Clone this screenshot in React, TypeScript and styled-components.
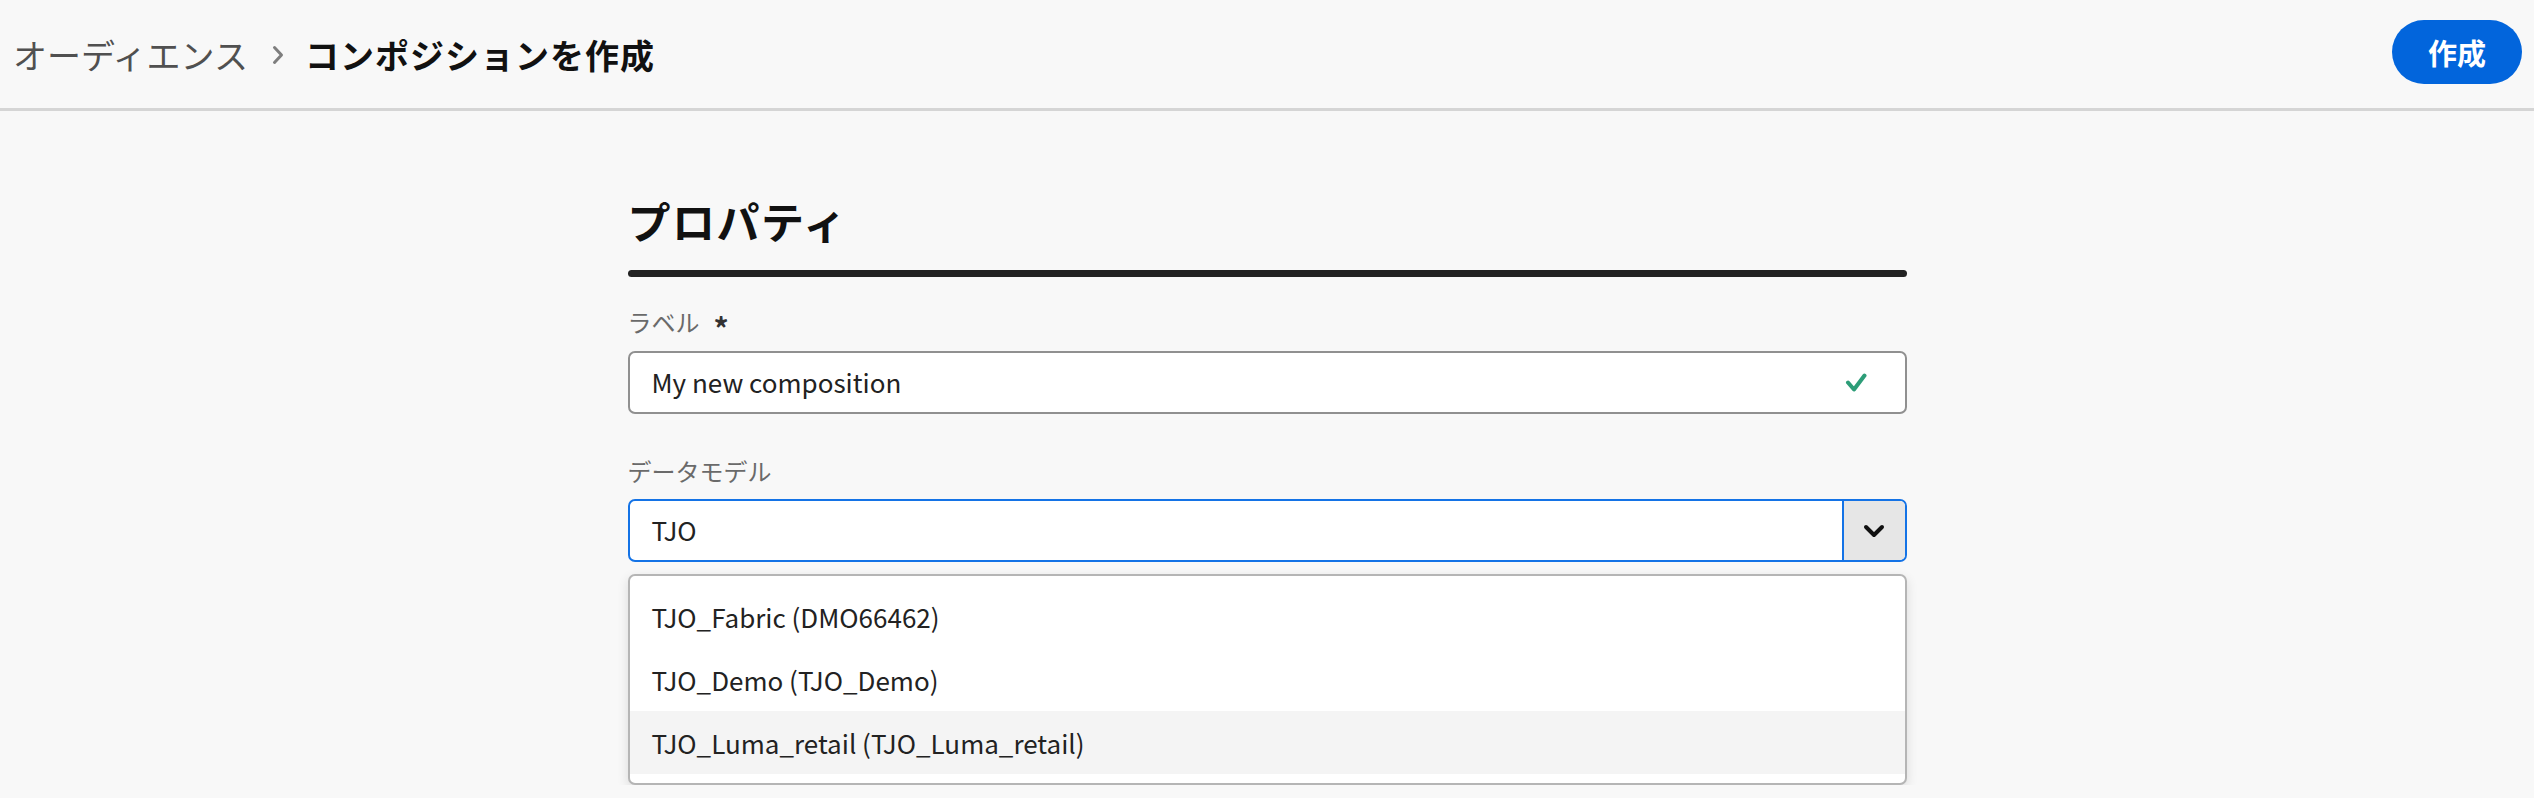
import { FC } from "react";
import styled, { createGlobalStyle } from "styled-components";

const GlobalStyle = createGlobalStyle`
  html, body {
    margin: 0;
    padding: 0;
    background: #f8f8f8;
  }
  body {
    font-family: "Noto Sans CJK JP", "Noto Sans", sans-serif;
    color: #222;
  }
`;

interface IOption {
  label: string;
  hovered?: boolean;
}

const options: IOption[] = [
  { label: "TJO_Fabric (DMO66462)" },
  { label: "TJO_Demo (TJO_Demo)" },
  { label: "TJO_Luma_retail (TJO_Luma_retail)", hovered: true },
];

const ChevronRight: FC = () => (
  <svg width="12" height="20" viewBox="0 0 12 20" fill="none">
    <path d="M2.5 2.5 L9.5 10 L2.5 17.5" stroke="#7e7e7e" strokeWidth="3" strokeLinecap="round" strokeLinejoin="round" />
  </svg>
);

const CheckIcon: FC = () => (
  <svg width="22" height="22" viewBox="0 0 22 22" fill="none">
    <path d="M3 10.5 L9 17.5 L19.5 3.5" stroke="#2d9d78" strokeWidth="4" strokeLinecap="round" strokeLinejoin="round" />
  </svg>
);

const ChevronDown: FC = () => (
  <svg width="22" height="14" viewBox="0 0 22 14" fill="none">
    <path d="M3 3 L11 11 L19 3" stroke="#111" strokeWidth="4" strokeLinecap="round" strokeLinejoin="round" />
  </svg>
);

const App: FC = () => {
  return (
    <>
      <GlobalStyle />
      <Header>
        <Breadcrumb>
          <CrumbLink>オーディエンス</CrumbLink>
          <CrumbSeparator>
            <ChevronRight />
          </CrumbSeparator>
          <CrumbCurrent>コンポジションを作成</CrumbCurrent>
        </Breadcrumb>
        <PrimaryButton>作成</PrimaryButton>
      </Header>
      <Main>
        <Section>
          <SectionTitle>プロパティ</SectionTitle>
          <SectionRule />

          <FieldLabel>
            ラベル
            <Required>*</Required>
          </FieldLabel>
          <TextField>
            <FieldValue>My new composition</FieldValue>
            <ValidIcon>
              <CheckIcon />
            </ValidIcon>
          </TextField>

          <FieldLabel $spaced>データモデル</FieldLabel>
          <ComboBox>
            <FieldValue>TJO</FieldValue>
            <ComboButton>
              <ChevronDown />
            </ComboButton>
          </ComboBox>

          <Popover>
            {options.map((option) => (
              <OptionItem key={option.label} $hovered={option.hovered}>
                {option.label}
              </OptionItem>
            ))}
          </Popover>
        </Section>
      </Main>
    </>
  );
};

export default App;

const Header = styled.header`
  height: 108px;
  box-sizing: content-box;
  border-bottom: 3px solid #d5d5d5;
  display: flex;
  align-items: center;
  justify-content: space-between;
  padding: 0 12px 0 13px;
`;

const Breadcrumb = styled.nav`
  display: flex;
  align-items: center;
  font-size: 34px;
  line-height: 1;
  margin-top: 2px;
`;

const CrumbLink = styled.span`
  color: #505050;
  font-weight: 400;
`;

const CrumbSeparator = styled.span`
  display: flex;
  align-items: center;
  margin: 0 21px 0 24px;
`;

const CrumbCurrent = styled.span`
  color: #111;
  font-weight: 700;
  letter-spacing: 1px;
`;

const PrimaryButton = styled.button`
  height: 64px;
  width: 130px;
  border: none;
  border-radius: 32px;
  background: #0265dc;
  color: #fff;
  font-family: "Noto Sans CJK JP", sans-serif;
  font-size: 29px;
  font-weight: 700;
  margin-top: -4px;
  cursor: pointer;
`;

const Main = styled.main`
  padding-top: 83px;
`;

const Section = styled.section`
  width: 1279px;
  margin: 0 auto;
  display: flex;
  flex-direction: column;
`;

const SectionTitle = styled.h2`
  margin: 0;
  font-size: 43px;
  line-height: 52px;
  font-weight: 700;
  color: #111;
  letter-spacing: 1.5px;
`;

const SectionRule = styled.div`
  height: 7px;
  border-radius: 4px;
  background: #222;
  margin-top: 24px;
`;

const FieldLabel = styled.label<{ $spaced?: boolean }>`
  display: flex;
  align-items: center;
  font-size: 24px;
  line-height: 28px;
  color: #6a6a6a;
  margin-top: ${({ $spaced }) => ($spaced ? "43px" : "26px")};
  margin-bottom: ${({ $spaced }) => ($spaced ? "14px" : "10px")};
`;

const Required = styled.span`
  color: #333;
  font-weight: 700;
  font-size: 30px;
  margin: 10px 0 0 14px;
`;

const TextField = styled.div`
  height: 63px;
  box-sizing: border-box;
  border: 2px solid #909090;
  border-radius: 7px;
  background: #fff;
  display: flex;
  align-items: center;
  padding: 0 0 0 22px;
`;

const FieldValue = styled.span`
  flex: 1;
  font-size: 26px;
  color: #222;
  line-height: 1;
  margin-top: -2px;
`;

const ValidIcon = styled.span`
  display: flex;
  width: 50px;
  justify-content: center;
  margin-right: 24px;
`;

const ComboBox = styled.div`
  height: 63px;
  box-sizing: border-box;
  border: 2px solid #1473e6;
  border-radius: 7px;
  background: #fff;
  display: flex;
  align-items: center;
  padding-left: 22px;
  overflow: hidden;
`;

const ComboButton = styled.div`
  align-self: stretch;
  width: 61px;
  background: #e6e6e6;
  border-left: 2px solid #1473e6;
  display: flex;
  align-items: center;
  justify-content: center;
`;

const Popover = styled.ul`
  list-style: none;
  margin: 12px 0 0;
  padding: 9px 0 9px;
  background: #fff;
  border: 2px solid #b5b5b5;
  border-radius: 7px;
  box-shadow: 0 4px 12px rgba(0, 0, 0, 0.12);
`;

const OptionItem = styled.li<{ $hovered?: boolean }>`
  height: 63px;
  display: flex;
  align-items: center;
  padding-left: 22px;
  font-size: 26px;
  color: #222;
  background: ${({ $hovered }) => ($hovered ? "#f4f4f4" : "transparent")};
`;
